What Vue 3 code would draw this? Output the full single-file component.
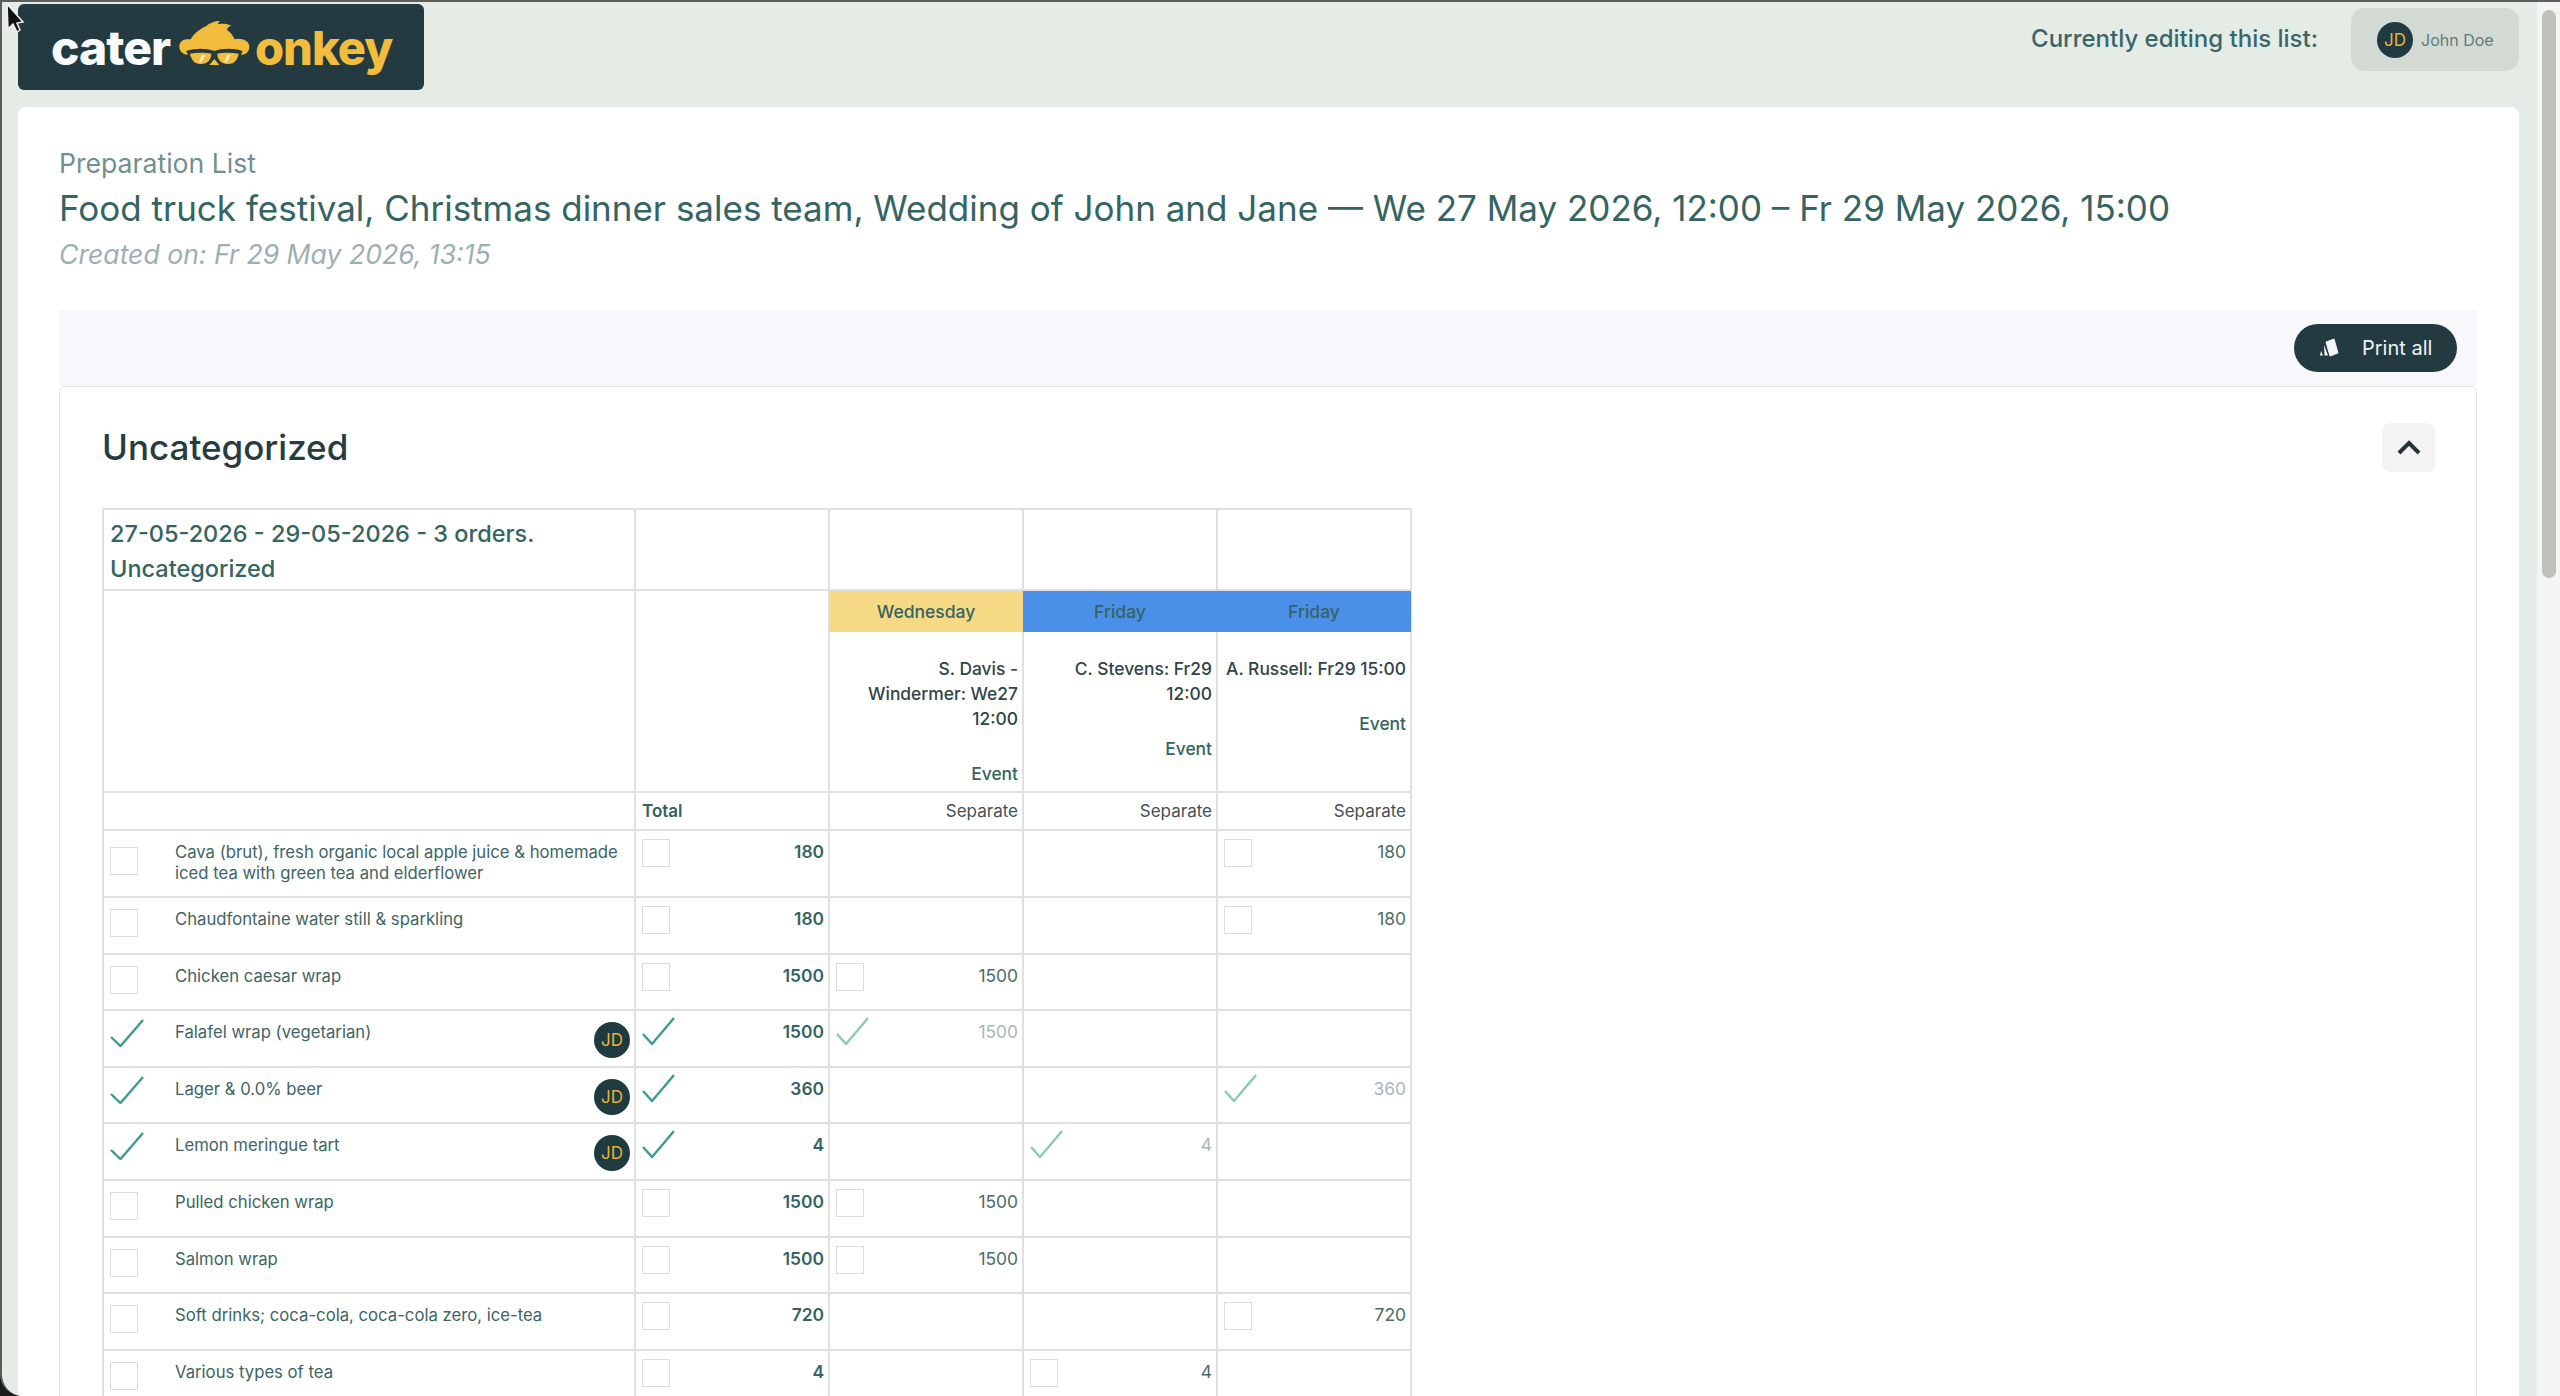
<template>
  <div class="page">
    <svg class="cursor" width="30" height="36" viewBox="0 0 30 36">
      <path d="M7 4 L8 29 L13 24 L17 32 L20 30 L17 23 L23 22 Z" fill="#111" stroke="#eee" stroke-width="1.5" />
    </svg>

    <header class="topbar">
      <div class="logo">
        <span class="logo-cater">cater</span>
        <svg class="logo-mark" width="90" height="60" viewBox="0 0 270 180">
          <path d="M28 95 C28 78 42 70 62 73 C72 55 90 42 108 34 C118 24 135 18 150 18 C145 22 143 26 144 28 C158 25 172 27 184 32 C175 35 170 40 172 46 C182 52 188 62 194 73 C212 68 240 75 238 98 C236 115 220 122 208 118 L200 150 L70 150 L60 118 C45 122 28 112 28 95 Z" fill="#f2bd3c" />
          <path d="M48 108 C80 98 110 100 133 108 C155 100 190 98 218 108 L212 122 L202 152 L150 152 L133 132 L116 152 L66 152 L56 122 Z" fill="#233a41" />
          <path d="M60 116 C80 112 105 112 124 116 C124 132 114 147 92 147 C72 147 63 132 60 116 Z M142 116 C160 112 185 112 206 116 C203 132 194 147 174 147 C152 147 142 132 142 116 Z" fill="#f2bd3c" />
          <path d="M96 120 L106 120 L94 142 L86 142 Z M172 120 L182 120 L170 142 L162 142 Z" fill="#fbeec8" />
        </svg>
        <span class="logo-onkey">onkey</span>
      </div>
      <div class="editing">
        <span class="editing-label">Currently editing this list:</span>
        <div class="chip">
          <span class="avatar">JD</span>
          <span class="chip-name">John Doe</span>
        </div>
      </div>
    </header>

    <main class="card">
      <div class="kicker">Preparation List</div>
      <h1 class="title">Food truck festival, Christmas dinner sales team, Wedding of John and Jane — We 27 May 2026, 12:00 – Fr 29 May 2026, 15:00</h1>
      <div class="created">Created on: Fr 29 May 2026, 13:15</div>

      <div class="toolbar">
        <button class="print" type="button">
          <svg width="20" height="22" viewBox="0 0 20 22">
            <path d="M7 5 L15 2 L19 16 L11 19 Z" fill="#f4f7f8" stroke="#f4f7f8" stroke-width="1" stroke-linejoin="round" />
            <path d="M5 8 L9 18.500 L5.500 18.500 Z M2 14 L4 18.500 L1 18.500 Z" fill="#f4f7f8" />
          </svg>
          <span>Print all</span>
        </button>
      </div>

      <section class="panel">
        <div class="panel-head">
          <h2>Uncategorized</h2>
          <button class="collapse" type="button">
            <svg width="24" height="16" viewBox="0 0 24 16">
              <path d="M2 14 L12 4 L22 14" fill="none" stroke="#263234" stroke-width="4" />
            </svg>
          </button>
        </div>

        <table class="sheet">
          <colgroup>
            <col class="c-name" />
            <col class="c-num" />
            <col class="c-num" />
            <col class="c-num" />
            <col class="c-num" />
          </colgroup>
          <tbody>
            <tr class="r-title">
              <td class="range">27-05-2026 - 29-05-2026 - 3 orders.<br />Uncategorized</td>
              <td></td>
              <td></td>
              <td></td>
              <td></td>
            </tr>
            <tr class="r-orders">
              <td></td>
              <td></td>
              <td v-for="o in orders" :key="o.name" class="order">
                <div class="day" :class="o.tone">{{ o.day }}</div>
                <div class="order-name">{{ o.name }}</div>
                <div class="order-type">Event</div>
              </td>
            </tr>
            <tr class="r-kind">
              <td></td>
              <td class="total-head">Total</td>
              <td class="sep">Separate</td>
              <td class="sep">Separate</td>
              <td class="sep">Separate</td>
            </tr>
            <tr v-for="item in items" :key="item.name" class="r-item" :class="{ tall: item.tall }">
              <td>
                <div class="name-cell">
                  <svg v-if="item.done" class="tick-big" width="34" height="28" viewBox="0 0 34 28">
                    <path d="M1 18 L10.500 27 L33 1" fill="none" stroke="#3e9c8a" stroke-width="2.400" />
                  </svg>
                  <span v-else class="box box-name"></span>
                  <span class="item-name">{{ item.name }}</span>
                  <span v-if="item.done" class="avatar avatar-row">JD</span>
                </div>
              </td>
              <td>
                <div class="qty-cell total">
                  <svg v-if="item.done" class="tick" width="33" height="28" viewBox="0 0 33 28">
                    <path d="M1 17 L10 27 L32 1" fill="none" stroke="#3e9c8a" stroke-width="2.400" />
                  </svg>
                  <span v-else class="box"></span>
                  <span>{{ item.qty }}</span>
                </div>
              </td>
              <td v-for="n in 3" :key="n">
                <div v-if="item.col === n" class="qty-cell" :class="{ faded: item.done }">
                  <svg v-if="item.done" class="tick" width="33" height="28" viewBox="0 0 33 28">
                    <path d="M1 17 L10 27 L32 1" fill="none" stroke="#8cc9b9" stroke-width="2.400" />
                  </svg>
                  <span v-else class="box"></span>
                  <span>{{ item.qty }}</span>
                </div>
              </td>
            </tr>
          </tbody>
        </table>
      </section>
    </main>

    <div class="scrollbar"><div class="thumb"></div></div>
  </div>
</template>

<script setup>
const orders = [
  { day: 'Wednesday', tone: 'yellow', name: 'S. Davis -\nWindermer: We27\n12:00' },
  { day: 'Friday', tone: 'blue', name: 'C. Stevens: Fr29\n12:00' },
  { day: 'Friday', tone: 'blue', name: 'A. Russell: Fr29 15:00' }
]

const items = [
  { name: 'Cava (brut), fresh organic local apple juice & homemade iced tea with green tea and elderflower', qty: 180, col: 3, tall: true },
  { name: 'Chaudfontaine water still & sparkling', qty: 180, col: 3 },
  { name: 'Chicken caesar wrap', qty: 1500, col: 1 },
  { name: 'Falafel wrap (vegetarian)', qty: 1500, col: 1, done: true },
  { name: 'Lager & 0.0% beer', qty: 360, col: 3, done: true },
  { name: 'Lemon meringue tart', qty: 4, col: 2, done: true },
  { name: 'Pulled chicken wrap', qty: 1500, col: 1 },
  { name: 'Salmon wrap', qty: 1500, col: 1 },
  { name: 'Soft drinks; coca-cola, coca-cola zero, ice-tea', qty: 720, col: 3 },
  { name: 'Various types of tea', qty: 4, col: 2 }
]
</script>

<style>
html, body {
  margin: 0;
  height: 100%;
  overflow: hidden;
  background: #1c1c1c;
}
</style>

<style scoped>
.page {
  position: relative;
  height: 1396px;
  overflow: hidden;
  box-sizing: border-box;
  padding-right: 41px;
  background: #e4ece5;
  border-top: 2px solid #5a5f5c;
  border-left: 2px solid #5a5f5c;
  border-bottom-left-radius: 22px;
  font-family: Inter, "Noto Sans", sans-serif;
  color: #356463;
}

.cursor {
  position: absolute;
  left: -2px;
  top: -2px;
  z-index: 5;
}

.topbar {
  display: flex;
  justify-content: space-between;
  height: 105px;
  padding-left: 16px;
}

.logo {
  display: flex;
  align-items: flex-start;
  width: 406px;
  height: 86px;
  margin-top: 2px;
  box-sizing: border-box;
  padding-left: 33px;
  background: #233a41;
  border-radius: 6px;
  font-size: 48px;
  font-weight: 800;
  line-height: 1;
  letter-spacing: -1px;
}

.logo-cater {
  width: 119px;
  margin-top: 20px;
  color: #f7fbfd;
}

.logo-onkey {
  margin-top: 20px;
  color: #f2bd3c;
  font-size: 47px;
}

.logo-mark {
  flex: none;
  margin: 11px -5px 0 0;
}

.editing {
  display: flex;
  align-items: flex-start;
  gap: 33px;
}

.editing-label {
  margin-top: 22px;
  font-size: 24px;
  font-weight: 500;
  color: #3a6669;
}

.chip {
  display: flex;
  align-items: center;
  gap: 8px;
  width: 168px;
  height: 63px;
  margin-top: 6px;
  box-sizing: border-box;
  padding-left: 26px;
  background: #d3d9d3;
  border-radius: 14px;
  font-size: 16px;
  color: #5f7d79;
}

.avatar {
  display: flex;
  align-items: center;
  justify-content: center;
  flex: none;
  width: 36px;
  height: 36px;
  background: #1f3b40;
  border-radius: 50%;
  color: #e9b23c;
  font-size: 17px;
}

.card {
  height: 1400px;
  margin-left: 16px;
  box-sizing: border-box;
  padding: 40px 42px 0 41px;
  background: #fff;
  border-radius: 8px 8px 0 0;
}

.kicker {
  font-size: 26.600px;
  line-height: 32px;
  color: #6f9091;
}

.title {
  margin: 6px 0 0;
  font-size: 35px;
  font-weight: 400;
  line-height: 46px;
  color: #356463;
  white-space: nowrap;
}

.created {
  margin-top: 5px;
  font-size: 26.600px;
  font-style: italic;
  line-height: 36px;
  color: #9cb0b3;
}

.toolbar {
  display: flex;
  justify-content: flex-end;
  align-items: center;
  height: 76px;
  margin-top: 38px;
  padding-right: 20px;
  background: #f6f8fc;
}

.print {
  display: flex;
  align-items: center;
  gap: 23px;
  width: 163px;
  height: 48px;
  box-sizing: border-box;
  padding: 0 0 0 25px;
  border: none;
  border-radius: 24px;
  background: #233a41;
  color: #eef4f6;
  font-family: inherit;
  font-size: 20px;
}

.print svg {
  flex: none;
}

.panel {
  border: 1px solid #e2e2e2;
  border-radius: 6px 6px 0 0;
  padding: 35px 41px 0 42px;
}

.panel-head {
  display: flex;
  justify-content: space-between;
  align-items: center;
  height: 50px;
}

.panel-head h2 {
  margin: 0;
  font-size: 35px;
  font-weight: 500;
  color: #263c3f;
}

.collapse {
  display: flex;
  align-items: center;
  justify-content: center;
  width: 53px;
  height: 49px;
  padding: 0;
  border: none;
  border-radius: 8px;
  background: #f3f3f3;
}

.sheet {
  width: 1308px;
  margin-top: 36px;
  table-layout: fixed;
  border-collapse: collapse;
}

.c-name {
  width: 532px;
}

.c-num {
  width: 194px;
}

.sheet td {
  padding: 0;
  border: 2px solid #e0e0e0;
  vertical-align: top;
}

.r-title {
  height: 81px;
}

.range {
  padding: 6px 6px 0 6px !important;
  font-size: 23.500px;
  font-weight: 500;
  line-height: 35px;
}

.r-orders {
  height: 202px;
}

.day {
  position: relative;
  height: 41px;
  margin: 0 -1px;
  background: #f6d985;
  font-size: 17.500px;
  font-weight: 500;
  line-height: 41px;
  text-align: center;
  color: #356463;
}

.day.blue {
  background: #4a90e8;
}

.order {
  text-align: right;
}

.order-name {
  padding: 24px 4px 0;
  font-size: 17.400px;
  font-weight: 500;
  line-height: 25px;
  white-space: pre-line;
  color: #2f4548;
}

.order-type {
  margin-top: 30px;
  padding: 0 4px;
  font-size: 17.400px;
  font-weight: 500;
  line-height: 25px;
}

.r-kind {
  height: 38px;
}

.r-kind td {
  padding: 0 4px 0 6px;
  font-size: 17px;
  vertical-align: middle;
}

.total-head {
  font-weight: 600;
}

.sep {
  text-align: right;
  color: #3e5355;
}

.r-item {
  height: 56.600px;
}

.r-item.tall {
  height: 67px;
}

.name-cell {
  display: flex;
  align-items: flex-start;
  padding: 11px 4px 0 6px;
}

.box {
  flex: none;
  width: 26px;
  height: 26px;
  margin-top: -1px;
  background: #fff;
  border: 1px solid #dcdcdc;
}

.box-name {
  margin-top: 0;
}

.r-item.tall .box-name {
  margin-top: 5px;
}

.tick-big {
  flex: none;
  width: 34px;
  margin-top: -3px;
}

.item-name {
  flex: 1;
  min-width: 0;
  margin-left: 37px;
  font-size: 16.700px;
  line-height: 21px;
  color: #3e6463;
}

.tick-big + .item-name {
  margin-left: 31px;
}

.qty-cell {
  display: flex;
  justify-content: space-between;
  align-items: flex-start;
  padding: 9px 4px 0 6px;
  font-size: 17.400px;
  line-height: 24px;
  color: #4d6b69;
}

.qty-cell.total {
  font-weight: 600;
  color: #356463;
}

.qty-cell.faded {
  color: #a9b8b8;
}

.tick {
  flex: none;
  margin-top: -3px;
}

.scrollbar {
  position: absolute;
  top: 0;
  right: 0;
  bottom: 0;
  width: 23px;
  background: #f4f4f2;
}

.thumb {
  width: 14px;
  height: 568px;
  margin: 8px 0 0 5px;
  background: #bfc1ba;
  border-radius: 7px;
}
</style>
